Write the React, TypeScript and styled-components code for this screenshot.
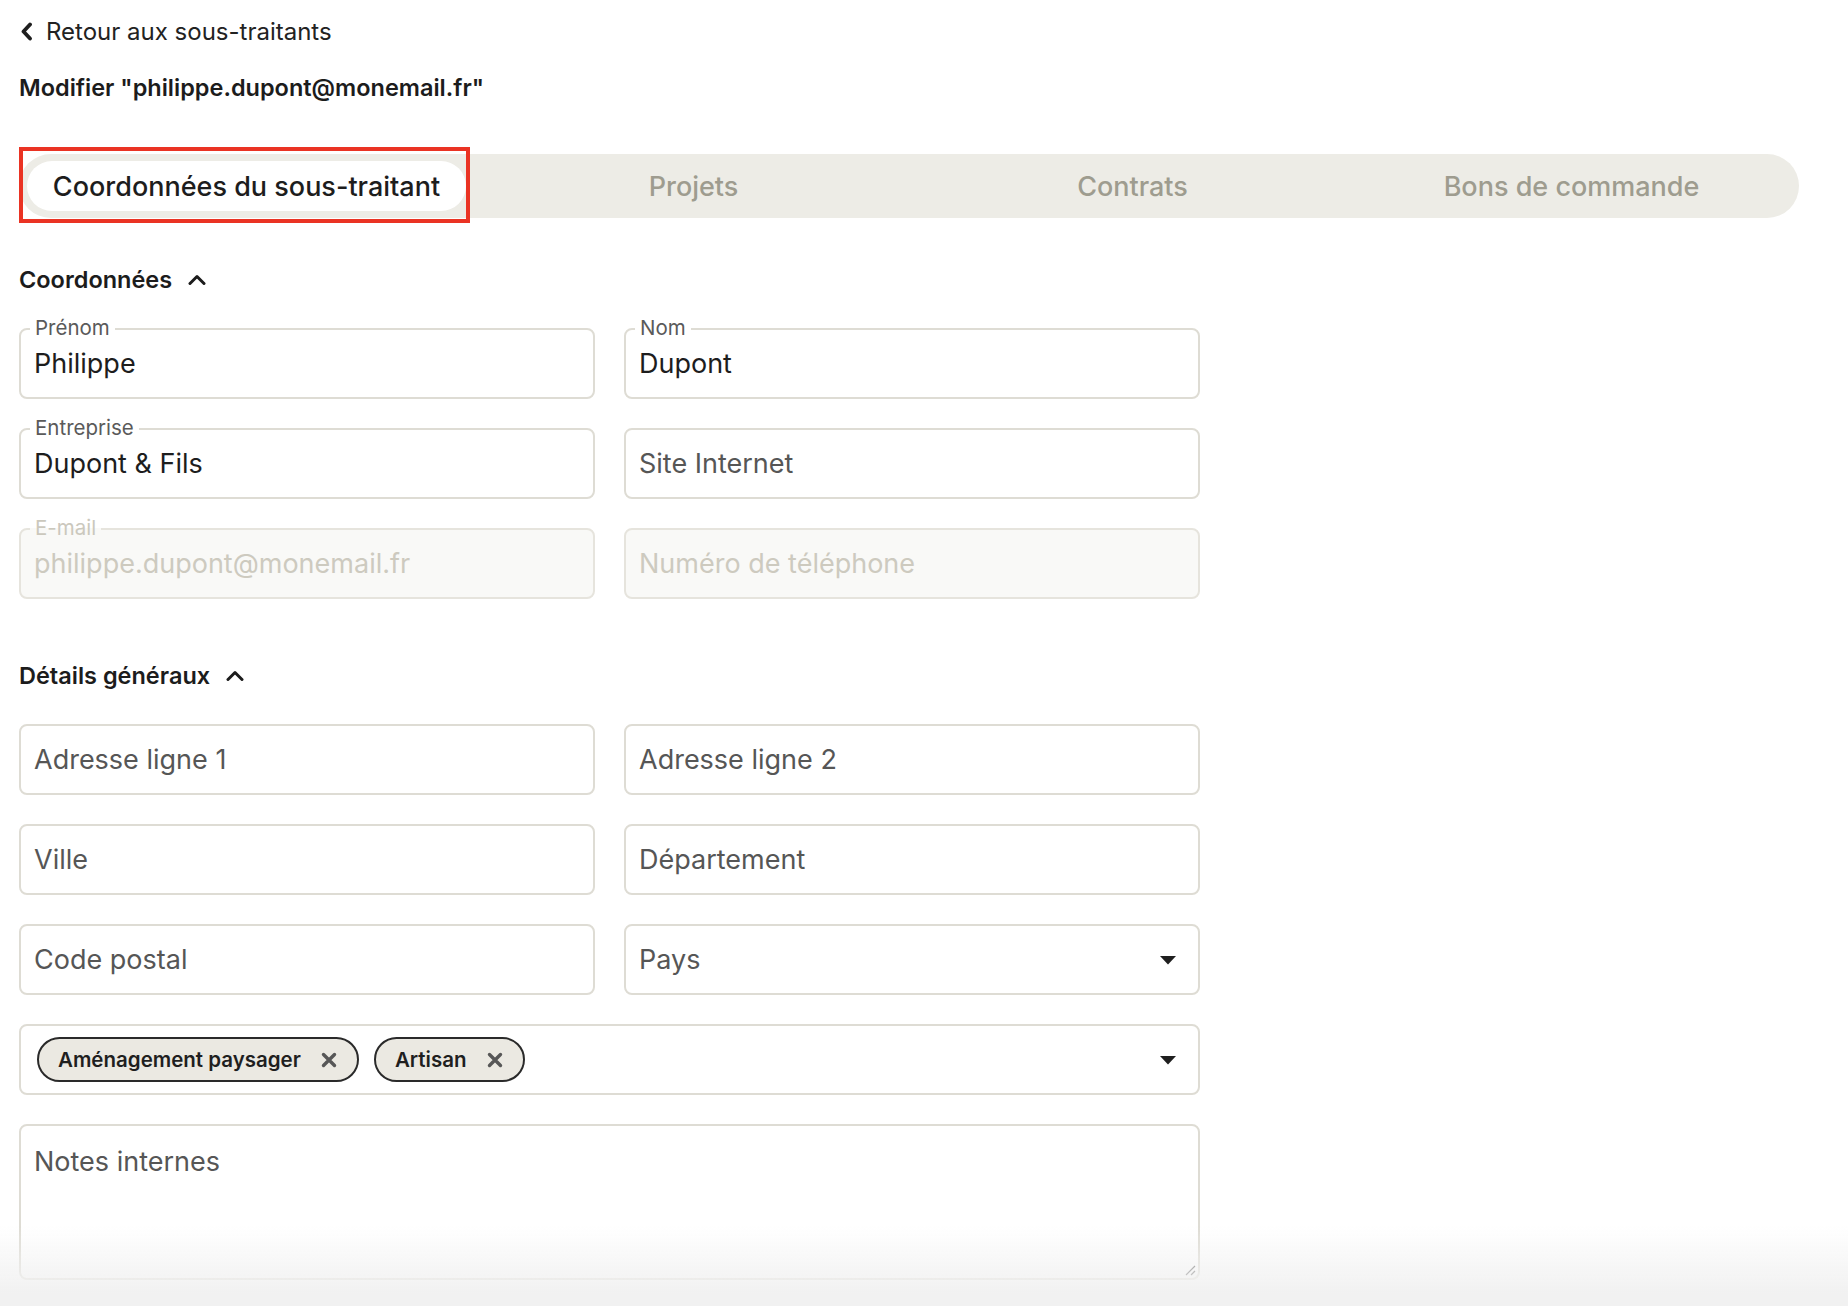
import React from "react";
import styled, { createGlobalStyle } from "styled-components";

const GlobalStyle = createGlobalStyle`
  * { box-sizing: border-box; }
  body {
    margin: 0;
    background: #ffffff;
    font-family: Inter, "Liberation Sans", sans-serif;
    color: #1f1f1f;
  }
`;

const Page = styled.div`
  padding: 16px 49px 40px 19px;
  width: 1848px;
`;

const BackLink = styled.a`
  display: flex;
  align-items: center;
  gap: 13px;
  height: 30px;
  font-size: 24px;
  color: #222;
  text-decoration: none;
  svg { margin-left: 1px; }
`;

const Title = styled.h1`
  margin: 27px 0 0;
  font-size: 23.5px;
  line-height: 30px;
  font-weight: 600;
  color: #1c1c1c;
`;

const TabBarWrap = styled.div`
  position: relative;
  margin-top: 51px;
`;

const TabBar = styled.div`
  display: flex;
  padding: 7px 8px;
  background: #edece6;
  border-radius: 32px;
  width: 1780px;
`;

const Tab = styled.div<{ $active?: boolean }>`
  flex: 1;
  height: 50px;
  display: flex;
  align-items: center;
  justify-content: center;
  border-radius: 25px;
  font-size: 27px;
  font-weight: 500;
  color: ${(p) => (p.$active ? "#1d1d1d" : "#9e9c8f")};
  background: ${(p) => (p.$active ? "#ffffff" : "transparent")};
  margin-right: ${(p) => (p.$active ? "8px" : "0")};
`;

const Highlight = styled.div`
  position: absolute;
  left: 0;
  top: -7px;
  width: 451px;
  height: 76px;
  border: 4px solid #ea3323;
  pointer-events: none;
`;

const SectionHeader = styled.div<{ $top: number }>`
  display: flex;
  align-items: center;
  gap: 16px;
  margin-top: ${(p) => p.$top}px;
  height: 30px;
  font-size: 23.5px;
  font-weight: 600;
  color: #1c1c1c;
`;

const FormGrid = styled.div`
  display: grid;
  grid-template-columns: 576px 576px;
  column-gap: 29px;
  row-gap: 29px;
  margin-top: 34px;
`;

const Field = styled.div<{ $disabled?: boolean; $full?: boolean; $tall?: boolean }>`
  position: relative;
  grid-column: ${(p) => (p.$full ? "1 / span 2" : "auto")};
  height: ${(p) => (p.$tall ? "156px" : "71px")};
  border: 2px solid ${(p) => (p.$disabled ? "#e6e4dd" : "#dedcd4")};
  border-radius: 8px;
  background: ${(p) => (p.$disabled ? "#f9f9f7" : "#ffffff")};
  display: flex;
  align-items: ${(p) => (p.$tall ? "flex-start" : "center")};
  padding: ${(p) => (p.$tall ? "19px 13px" : "0 13px")};
`;

const FloatLabel = styled.span<{ $disabled?: boolean }>`
  position: absolute;
  left: 9px;
  top: -14px;
  padding: 0 5px;
  font-size: 20.5px;
  line-height: 24px;
  color: ${(p) => (p.$disabled ? "#cbc8bd" : "#5a5a5a")};
  background: ${(p) => (p.$disabled ? "linear-gradient(#ffffff 50%, #f9f9f7 50%)" : "#ffffff")};
  border-radius: 6px;
`;

const Value = styled.span<{ $tone: "value" | "placeholder" | "disabled" }>`
  font-size: 27px;
  flex: 1;
  color: ${(p) =>
    p.$tone === "value" ? "#1d1d1d" : p.$tone === "disabled" ? "#cdcabf" : "#565656"};
`;

const Caret = styled.span`
  display: flex;
  margin-right: 8px;
`;

const Tags = styled.div`
  display: flex;
  gap: 15px;
  flex: 1;
  padding-left: 3px;
`;

const Tag = styled.span`
  display: inline-flex;
  align-items: center;
  gap: 20px;
  height: 45px;
  padding: 0 20px 0 19px;
  border: 2px solid #2a2a2a;
  border-radius: 23px;
  background: #ebe9e2;
  font-size: 20.5px;
  font-weight: 600;
  color: #1f1f1f;
`;

const ResizeGrip = styled.svg`
  position: absolute;
  right: 1px;
  bottom: 1px;
`;

const BottomFade = styled.div`
  position: fixed;
  left: 0;
  right: 0;
  bottom: 0;
  height: 80px;
  background: linear-gradient(rgba(242, 242, 242, 0), #f1f1f1 85%);
  pointer-events: none;
`;

const ChevronUp = () => (
  <svg width="18" height="11" viewBox="0 0 18 11">
    <polyline points="2,9.5 9,2.5 16,9.5" fill="none" stroke="#1c1c1c" strokeWidth="3" strokeLinecap="round" strokeLinejoin="round" />
  </svg>
);

const DropArrow = () => (
  <svg width="18" height="10" viewBox="0 0 18 10">
    <polygon points="1,1 17,1 9,9.5" fill="#1f1f1f" />
  </svg>
);

const Cross = () => (
  <svg width="16" height="16" viewBox="0 0 16 16">
    <path d="M2.5 2.5 L13.5 13.5 M13.5 2.5 L2.5 13.5" stroke="#575757" strokeWidth="3.4" strokeLinecap="round" />
  </svg>
);

type FieldDef = { label?: string; value?: string; placeholder?: string; disabled?: boolean; select?: boolean };

const contact: FieldDef[] = [
  { label: "Prénom", value: "Philippe" },
  { label: "Nom", value: "Dupont" },
  { label: "Entreprise", value: "Dupont & Fils" },
  { placeholder: "Site Internet" },
  { label: "E-mail", value: "philippe.dupont@monemail.fr", disabled: true },
  { placeholder: "Numéro de téléphone", disabled: true },
];

const details: FieldDef[] = [
  { placeholder: "Adresse ligne 1" },
  { placeholder: "Adresse ligne 2" },
  { placeholder: "Ville" },
  { placeholder: "Département" },
  { placeholder: "Code postal" },
  { placeholder: "Pays", select: true },
];

function renderField(f: FieldDef) {
  const tone = f.disabled ? "disabled" : f.value ? "value" : "placeholder";
  return (
    <Field key={f.label || f.placeholder} $disabled={f.disabled}>
      {f.label && <FloatLabel $disabled={f.disabled}>{f.label}</FloatLabel>}
      <Value $tone={tone}>{f.value || f.placeholder}</Value>
      {f.select && (
        <Caret>
          <DropArrow />
        </Caret>
      )}
    </Field>
  );
}

export default function App() {
  return (
    <>
      <GlobalStyle />
      <Page>
        <BackLink href="#">
          <svg width="13" height="19" viewBox="0 0 13 19">
            <polyline points="10,2.5 3.5,9.5 10,16.5" fill="none" stroke="#1f1f1f" strokeWidth="3.8" strokeLinecap="round" strokeLinejoin="round" />
          </svg>
          Retour aux sous-traitants
        </BackLink>
        <Title>Modifier "philippe.dupont@monemail.fr"</Title>

        <TabBarWrap>
          <TabBar>
            <Tab $active>Coordonnées du sous-traitant</Tab>
            <Tab>Projets</Tab>
            <Tab>Contrats</Tab>
            <Tab>Bons de commande</Tab>
          </TabBar>
          <Highlight />
        </TabBarWrap>

        <SectionHeader $top={46}>
          Coordonnées
          <ChevronUp />
        </SectionHeader>
        <FormGrid>{contact.map(renderField)}</FormGrid>

        <SectionHeader $top={61}>
          Détails généraux
          <ChevronUp />
        </SectionHeader>
        <FormGrid>
          {details.map(renderField)}
          <Field $full>
            <Tags>
              <Tag>
                Aménagement paysager
                <Cross />
              </Tag>
              <Tag>
                Artisan
                <Cross />
              </Tag>
            </Tags>
            <Caret>
              <DropArrow />
            </Caret>
          </Field>
          <Field $full $tall>
            <Value $tone="placeholder">Notes internes</Value>
            <ResizeGrip width="14" height="14" viewBox="0 0 14 14">
              <path d="M12 3 L3 12 M12 8 L8 12" stroke="#555" strokeWidth="1.2" />
            </ResizeGrip>
          </Field>
        </FormGrid>
      </Page>
      <BottomFade />
    </>
  );
}
